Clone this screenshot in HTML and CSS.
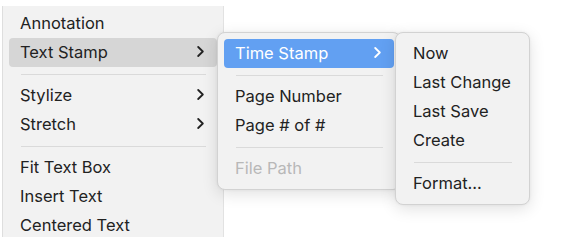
FILE: index.html
```html
<!DOCTYPE html>
<html lang="en">
<head>
  <meta charset="UTF-8" />
  <title>Text Stamp Menu</title>
  <link rel="stylesheet" href="styles.css">
</head>
<body>
  <div class="desk">
    <div class="menu root">
      <div class="item">Annotation</div>
      <div class="item sub open">Text Stamp<svg class="chev" viewBox="0 0 7 11"><polyline points="1.2,1 5.8,5.5 1.2,10" /></svg></div>
      <div class="sep"></div>
      <div class="item sub">Stylize<svg class="chev" viewBox="0 0 7 11"><polyline points="1.2,1 5.8,5.5 1.2,10" /></svg></div>
      <div class="item sub">Stretch<svg class="chev" viewBox="0 0 7 11"><polyline points="1.2,1 5.8,5.5 1.2,10" /></svg></div>
      <div class="sep"></div>
      <div class="item">Fit Text Box</div>
      <div class="item">Insert Text</div>
      <div class="item">Centered Text</div>
    </div>

    <div class="menu popup stamp">
      <div class="item sub active">Time Stamp<svg class="chev" viewBox="0 0 7 11"><polyline points="1.2,1 5.8,5.5 1.2,10" /></svg></div>
      <div class="sep"></div>
      <div class="item">Page Number</div>
      <div class="item">Page # of #</div>
      <div class="sep"></div>
      <div class="item disabled">File Path</div>
    </div>

    <div class="menu popup time">
      <div class="item">Now</div>
      <div class="item">Last Change</div>
      <div class="item">Last Save</div>
      <div class="item">Create</div>
      <div class="sep"></div>
      <div class="item">Format...</div>
    </div>
  </div>
</body>
</html>
```

FILE: styles.css
```css
* { box-sizing: border-box; }
body {
  margin: 0;
  background: #ffffff;
  font-family: "Inter", "Liberation Sans", sans-serif;
  font-size: 16.5px;
  color: #222222;
}
.desk {
  position: relative;
  width: 580px;
  height: 250px;
  padding: 6px 0 0 2px;
}
.menu {
  background: #f2f2f2;
  padding: 6px;
}
.root {
  width: 222px;
  height: 231px;
  padding-top: 3px;
  overflow: hidden;
  border-left: 1px solid #dedede;
  border-right: 1px solid #e2e2e2;
}
.popup {
  position: absolute;
  border: 1px solid #d2d2d2;
  border-radius: 8px;
  box-shadow: 0 4px 16px rgba(0, 0, 0, 0.12), 0 0 3px rgba(0, 0, 0, 0.06);
}
.stamp {
  left: 217px;
  top: 32px;
  width: 184px;
}
.time {
  left: 395px;
  top: 32px;
  width: 135px;
}
.item {
  display: flex;
  align-items: center;
  justify-content: space-between;
  height: 29px;
  padding: 0 12px 2px 11px;
  border-radius: 4px;
  white-space: nowrap;
}
.item.open { background: #d6d6d6; }
.item.active {
  background: #62a0f2;
  color: #ffffff;
}
.item.disabled { color: #b8b8b8; }
.chev {
  width: 7px;
  height: 11px;
  margin-right: 1px;
  fill: none;
  stroke: #222222;
  stroke-width: 1.8;
  stroke-linecap: round;
  stroke-linejoin: round;
}
.active .chev { stroke: #ffffff; }
.sep {
  height: 14px;
  display: flex;
  align-items: center;
  padding: 0 11px 0 12px;
}
.sep::before {
  content: "";
  flex: 1;
  height: 1px;
  background: #dadada;
}
```
